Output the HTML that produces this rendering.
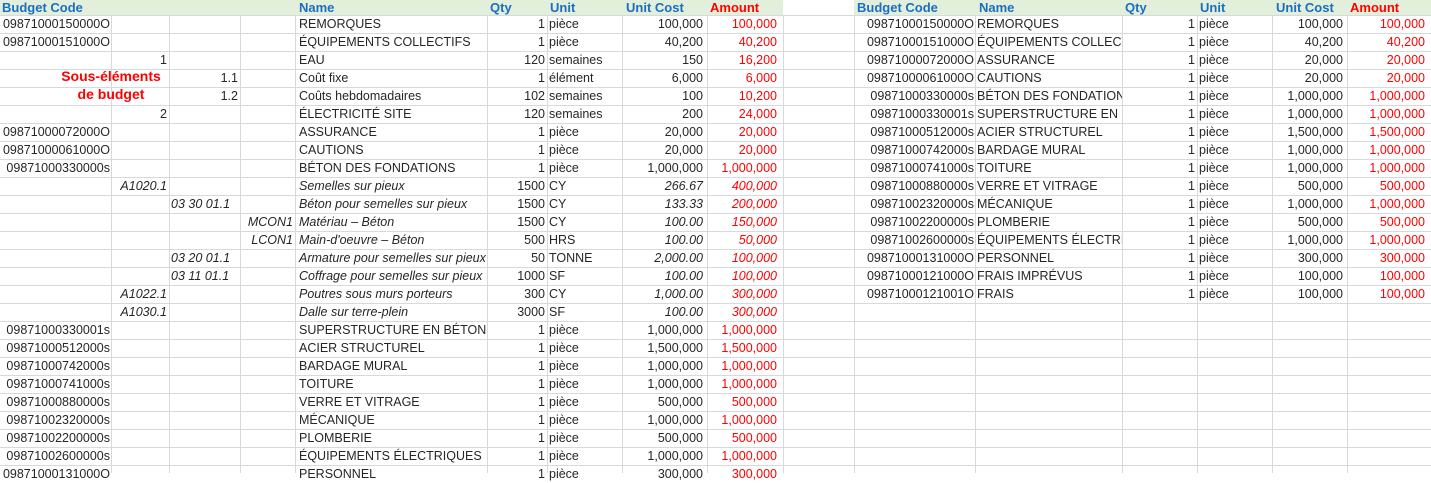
<!DOCTYPE html>
<html><head><meta charset="utf-8">
<style>
*{margin:0;padding:0;box-sizing:border-box}
body{width:1431px;height:473px;overflow:hidden;background:#fff;font-family:"Liberation Sans","Noto Sans CJK SC",sans-serif;font-size:12.5px;color:#262626;position:relative}
.hdr{position:absolute;top:0;height:15px;background:#e2efda}
.h{position:absolute;top:0;line-height:15px;font-weight:bold;color:#1b6ec2;font-size:13px}
.h.red{color:#f00}
.hl{position:absolute;left:0;width:1431px;height:1px;background:#d9d9d9}
.vl{position:absolute;top:15px;bottom:0;width:1px;background:#d9d9d9}
.T{position:absolute;top:15px}
.row{display:flex;height:18px;line-height:19px;white-space:nowrap}
.row>div{overflow:hidden;padding:0 2px;flex:none}
.L .row>div:nth-child(1){width:111px;text-align:right;padding-right:1px;padding-left:0}
.L .row>div:nth-child(2){width:58px;text-align:right}
.L .row>div:nth-child(3){width:71px;text-align:right}
.L .row>div:nth-child(4){width:55px;text-align:right}
.L .row>div:nth-child(5){width:192px;text-align:left;padding-left:4px}
.L .row>div:nth-child(6){width:60px;text-align:right}
.L .row>div:nth-child(7){width:75px;text-align:left}
.L .row>div:nth-child(8){width:85px;text-align:right;padding-right:4px}
.L .row>div:nth-child(9){width:76px;text-align:right;color:#f00;padding-right:6px}
.R .row>div:nth-child(1){width:121px;text-align:right;padding-right:1px}
.R .row>div:nth-child(2){width:147px;text-align:left;padding-left:2px}
.R .row>div:nth-child(3){width:75px;text-align:right}
.R .row>div:nth-child(4){width:75px;text-align:left}
.R .row>div:nth-child(5){width:75px;text-align:right;padding-right:4px}
.R .row>div:nth-child(6){width:84px;text-align:right;color:#f00;padding-right:6px}
.it>div:nth-child(1),.it>div:nth-child(2),.it>div:nth-child(3),.it>div:nth-child(4),.it>div:nth-child(5),.it>div:nth-child(8),.it>div:nth-child(9){font-style:italic}
.L .row>div.lt{text-align:left}
.sous{position:absolute;left:52px;top:67px;width:118px;text-align:center;color:#f00;font-weight:bold;font-size:14px;line-height:18px}
</style></head><body>
<div class="hdr" style="left:0;width:783px"></div>
<div class="hdr" style="left:854px;width:577px"></div>
<div class="h" style="left:2px">Budget Code</div>
<div class="h" style="left:299px">Name</div>
<div class="h" style="left:490px">Qty</div>
<div class="h" style="left:550px">Unit</div>
<div class="h" style="left:626px">Unit Cost</div>
<div class="h red" style="left:710px">Amount</div>
<div class="h" style="left:857px">Budget Code</div>
<div class="h" style="left:979px">Name</div>
<div class="h" style="left:1125px">Qty</div>
<div class="h" style="left:1200px">Unit</div>
<div class="h" style="left:1276px">Unit Cost</div>
<div class="h red" style="left:1350px">Amount</div>

<div class="hl" style="top:15px"></div><div class="hl" style="top:33px"></div><div class="hl" style="top:51px"></div><div class="hl" style="top:69px"></div><div class="hl" style="top:87px"></div><div class="hl" style="top:105px"></div><div class="hl" style="top:123px"></div><div class="hl" style="top:141px"></div><div class="hl" style="top:159px"></div><div class="hl" style="top:177px"></div><div class="hl" style="top:195px"></div><div class="hl" style="top:213px"></div><div class="hl" style="top:231px"></div><div class="hl" style="top:249px"></div><div class="hl" style="top:267px"></div><div class="hl" style="top:285px"></div><div class="hl" style="top:303px"></div><div class="hl" style="top:321px"></div><div class="hl" style="top:339px"></div><div class="hl" style="top:357px"></div><div class="hl" style="top:375px"></div><div class="hl" style="top:393px"></div><div class="hl" style="top:411px"></div><div class="hl" style="top:429px"></div><div class="hl" style="top:447px"></div><div class="hl" style="top:465px"></div>

<div class="vl" style="left:111px"></div><div class="vl" style="left:169px"></div><div class="vl" style="left:240px"></div><div class="vl" style="left:295px"></div><div class="vl" style="left:487px"></div><div class="vl" style="left:547px"></div><div class="vl" style="left:622px"></div><div class="vl" style="left:707px"></div><div class="vl" style="left:783px"></div><div class="vl" style="left:854px"></div><div class="vl" style="left:975px"></div><div class="vl" style="left:1122px"></div><div class="vl" style="left:1197px"></div><div class="vl" style="left:1272px"></div><div class="vl" style="left:1347px"></div>

<div class="T L" style="left:0">
<div class="row"><div>09871000150000O</div><div></div><div></div><div></div><div>REMORQUES</div><div>1</div><div>pièce</div><div>100,000</div><div>100,000</div></div>
<div class="row"><div>09871000151000O</div><div></div><div></div><div></div><div>ÉQUIPEMENTS COLLECTIFS</div><div>1</div><div>pièce</div><div>40,200</div><div>40,200</div></div>
<div class="row"><div></div><div>1</div><div></div><div></div><div>EAU</div><div>120</div><div>semaines</div><div>150</div><div>16,200</div></div>
<div class="row"><div></div><div></div><div>1.1</div><div></div><div>Coût fixe</div><div>1</div><div>élément</div><div>6,000</div><div>6,000</div></div>
<div class="row"><div></div><div></div><div>1.2</div><div></div><div>Coûts hebdomadaires</div><div>102</div><div>semaines</div><div>100</div><div>10,200</div></div>
<div class="row"><div></div><div>2</div><div></div><div></div><div>ÉLECTRICITÉ SITE</div><div>120</div><div>semaines</div><div>200</div><div>24,000</div></div>
<div class="row"><div>09871000072000O</div><div></div><div></div><div></div><div>ASSURANCE</div><div>1</div><div>pièce</div><div>20,000</div><div>20,000</div></div>
<div class="row"><div>09871000061000O</div><div></div><div></div><div></div><div>CAUTIONS</div><div>1</div><div>pièce</div><div>20,000</div><div>20,000</div></div>
<div class="row"><div>09871000330000s</div><div></div><div></div><div></div><div>BÉTON DES FONDATIONS</div><div>1</div><div>pièce</div><div>1,000,000</div><div>1,000,000</div></div>
<div class="row it"><div></div><div>A1020.1</div><div></div><div></div><div>Semelles sur pieux</div><div>1500</div><div>CY</div><div>266.67</div><div>400,000</div></div>
<div class="row it"><div></div><div></div><div class="lt">03 30 01.1</div><div></div><div>Béton pour semelles sur pieux</div><div>1500</div><div>CY</div><div>133.33</div><div>200,000</div></div>
<div class="row it"><div></div><div></div><div></div><div>MCON1</div><div>Matériau – Béton</div><div>1500</div><div>CY</div><div>100.00</div><div>150,000</div></div>
<div class="row it"><div></div><div></div><div></div><div>LCON1</div><div>Main-d'oeuvre – Béton</div><div>500</div><div>HRS</div><div>100.00</div><div>50,000</div></div>
<div class="row it"><div></div><div></div><div class="lt">03 20 01.1</div><div></div><div>Armature pour semelles sur pieux</div><div>50</div><div>TONNE</div><div>2,000.00</div><div>100,000</div></div>
<div class="row it"><div></div><div></div><div class="lt">03 11 01.1</div><div></div><div>Coffrage pour semelles sur pieux</div><div>1000</div><div>SF</div><div>100.00</div><div>100,000</div></div>
<div class="row it"><div></div><div>A1022.1</div><div></div><div></div><div>Poutres sous murs porteurs</div><div>300</div><div>CY</div><div>1,000.00</div><div>300,000</div></div>
<div class="row it"><div></div><div>A1030.1</div><div></div><div></div><div>Dalle sur terre-plein</div><div>3000</div><div>SF</div><div>100.00</div><div>300,000</div></div>
<div class="row"><div>09871000330001s</div><div></div><div></div><div></div><div>SUPERSTRUCTURE EN BÉTON</div><div>1</div><div>pièce</div><div>1,000,000</div><div>1,000,000</div></div>
<div class="row"><div>09871000512000s</div><div></div><div></div><div></div><div>ACIER STRUCTUREL</div><div>1</div><div>pièce</div><div>1,500,000</div><div>1,500,000</div></div>
<div class="row"><div>09871000742000s</div><div></div><div></div><div></div><div>BARDAGE MURAL</div><div>1</div><div>pièce</div><div>1,000,000</div><div>1,000,000</div></div>
<div class="row"><div>09871000741000s</div><div></div><div></div><div></div><div>TOITURE</div><div>1</div><div>pièce</div><div>1,000,000</div><div>1,000,000</div></div>
<div class="row"><div>09871000880000s</div><div></div><div></div><div></div><div>VERRE ET VITRAGE</div><div>1</div><div>pièce</div><div>500,000</div><div>500,000</div></div>
<div class="row"><div>09871002320000s</div><div></div><div></div><div></div><div>MÉCANIQUE</div><div>1</div><div>pièce</div><div>1,000,000</div><div>1,000,000</div></div>
<div class="row"><div>09871002200000s</div><div></div><div></div><div></div><div>PLOMBERIE</div><div>1</div><div>pièce</div><div>500,000</div><div>500,000</div></div>
<div class="row"><div>09871002600000s</div><div></div><div></div><div></div><div>ÉQUIPEMENTS ÉLECTRIQUES</div><div>1</div><div>pièce</div><div>1,000,000</div><div>1,000,000</div></div>
<div class="row"><div>09871000131000O</div><div></div><div></div><div></div><div>PERSONNEL</div><div>1</div><div>pièce</div><div>300,000</div><div>300,000</div></div>
</div>

<div class="T R" style="left:854px">
<div class="row"><div>09871000150000O</div><div>REMORQUES</div><div>1</div><div>pièce</div><div>100,000</div><div>100,000</div></div>
<div class="row"><div>09871000151000O</div><div>ÉQUIPEMENTS COLLECTIFS</div><div>1</div><div>pièce</div><div>40,200</div><div>40,200</div></div>
<div class="row"><div>09871000072000O</div><div>ASSURANCE</div><div>1</div><div>pièce</div><div>20,000</div><div>20,000</div></div>
<div class="row"><div>09871000061000O</div><div>CAUTIONS</div><div>1</div><div>pièce</div><div>20,000</div><div>20,000</div></div>
<div class="row"><div>09871000330000s</div><div>BÉTON DES FONDATIONS</div><div>1</div><div>pièce</div><div>1,000,000</div><div>1,000,000</div></div>
<div class="row"><div>09871000330001s</div><div>SUPERSTRUCTURE EN BÉTON</div><div>1</div><div>pièce</div><div>1,000,000</div><div>1,000,000</div></div>
<div class="row"><div>09871000512000s</div><div>ACIER STRUCTUREL</div><div>1</div><div>pièce</div><div>1,500,000</div><div>1,500,000</div></div>
<div class="row"><div>09871000742000s</div><div>BARDAGE MURAL</div><div>1</div><div>pièce</div><div>1,000,000</div><div>1,000,000</div></div>
<div class="row"><div>09871000741000s</div><div>TOITURE</div><div>1</div><div>pièce</div><div>1,000,000</div><div>1,000,000</div></div>
<div class="row"><div>09871000880000s</div><div>VERRE ET VITRAGE</div><div>1</div><div>pièce</div><div>500,000</div><div>500,000</div></div>
<div class="row"><div>09871002320000s</div><div>MÉCANIQUE</div><div>1</div><div>pièce</div><div>1,000,000</div><div>1,000,000</div></div>
<div class="row"><div>09871002200000s</div><div>PLOMBERIE</div><div>1</div><div>pièce</div><div>500,000</div><div>500,000</div></div>
<div class="row"><div>09871002600000s</div><div>ÉQUIPEMENTS ÉLECTRIQUES</div><div>1</div><div>pièce</div><div>1,000,000</div><div>1,000,000</div></div>
<div class="row"><div>09871000131000O</div><div>PERSONNEL</div><div>1</div><div>pièce</div><div>300,000</div><div>300,000</div></div>
<div class="row"><div>09871000121000O</div><div>FRAIS IMPRÉVUS</div><div>1</div><div>pièce</div><div>100,000</div><div>100,000</div></div>
<div class="row"><div>09871000121001O</div><div>FRAIS</div><div>1</div><div>pièce</div><div>100,000</div><div>100,000</div></div>
</div>

<div class="sous">Sous-éléments<br>de budget</div>
</body></html>
